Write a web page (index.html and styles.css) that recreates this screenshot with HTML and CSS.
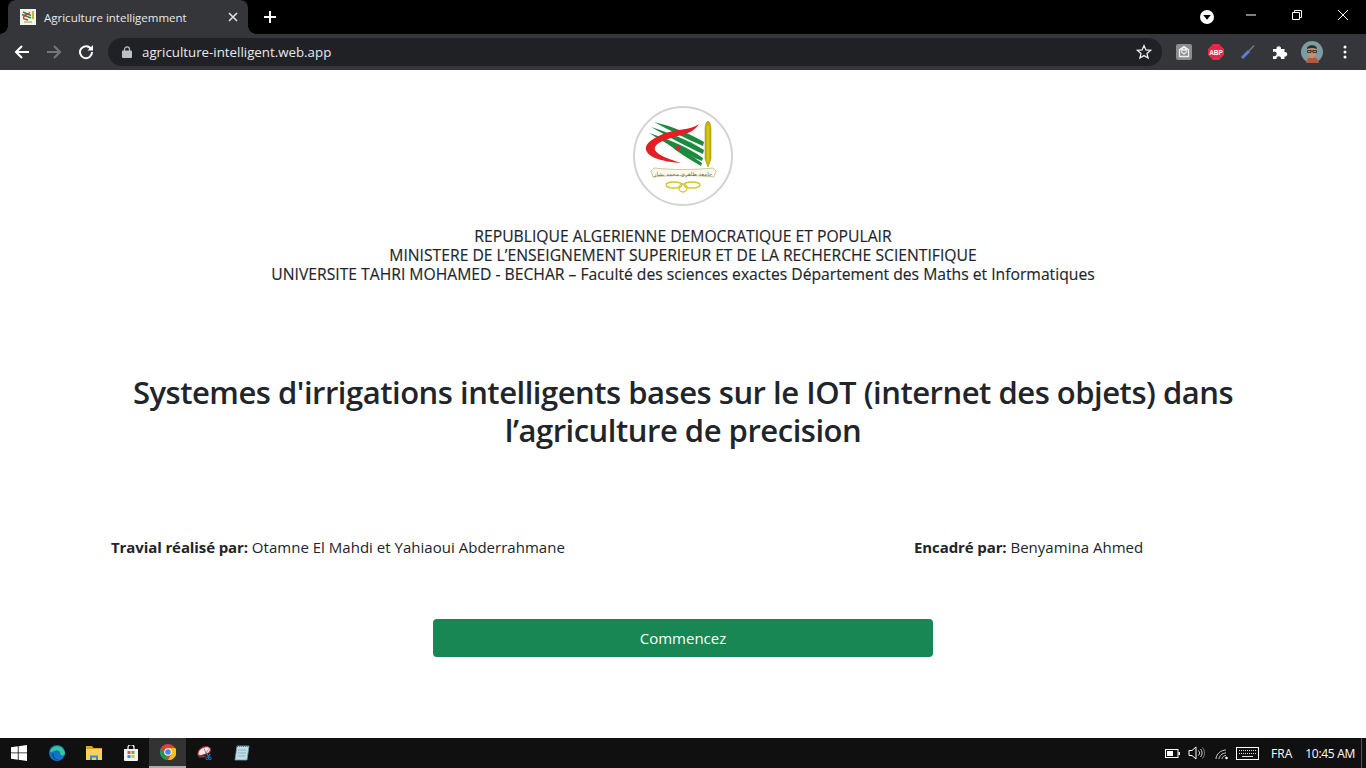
FILE: index.html
```html
<!DOCTYPE html>
<html lang="fr">
<head>
<meta charset="utf-8">
<title>Agriculture intelligemment</title>
<link rel="stylesheet" href="styles.css">
</head>
<body>
<div class="screen">
  <header class="chrome">
    <div class="tabstrip">
      <div class="tab">
        <svg class="favicon" viewBox="0 0 16 16"><rect width="16" height="16" fill="#f4f4ee"/><path d="M3 3l8 3.500M2 5.500l9 3.500" stroke="#2f8f3f" stroke-width="1.600" fill="none"/><path d="M10 3.500C6 6 2 7 4 10l4 1" stroke="#e0282c" stroke-width="1.400" fill="none"/><path d="M13 2v8" stroke="#b5a814" stroke-width="1.600"/><path d="M4 13h8" stroke="#c9c49a" stroke-width="2"/></svg>
        <span class="tab-title">Agriculture intelligemment</span>
        <svg class="tab-close" viewBox="0 0 10 10"><path d="M1 1l8 8M9 1l-8 8" stroke="#dee1e6" stroke-width="1.600"/></svg>
      </div>
      <svg class="new-tab" viewBox="0 0 12 12"><path d="M6 0v12M0 6h12" stroke="#fff" stroke-width="2"/></svg>
      <div class="window-controls">
        <svg class="profile-drop" viewBox="0 0 14 14"><circle cx="7" cy="7" r="7" fill="#fff"/><path d="M3.200 5h7.600L7 9.800z" fill="#000"/></svg>
        <svg class="win-btn" viewBox="0 0 10 10"><path d="M0 5h10" stroke="#fff"/></svg>
        <svg class="win-btn" viewBox="0 0 10 10"><path d="M.5 2.500h7v7h-7zM2.500 2.500v-2h7v7h-2" stroke="#fff" fill="none"/></svg>
        <svg class="win-btn" viewBox="0 0 10 10"><path d="M0 0l10 10M10 0L0 10" stroke="#fff"/></svg>
      </div>
    </div>
    <div class="toolbar">
      <svg class="nav-icon" viewBox="0 0 16 16"><path d="M15 8H2M8 2L2 8l6 6" stroke="#fff" stroke-width="2" fill="none"/></svg>
      <svg class="nav-icon" viewBox="0 0 16 16"><path d="M1 8h13M8 2l6 6-6 6" stroke="#75777a" stroke-width="2" fill="none"/></svg>
      <svg class="nav-icon" viewBox="0 0 16 16"><path d="M13.200 5.200A6 6 0 1 0 14 8" stroke="#fff" stroke-width="2" fill="none"/><path d="M9.500 6.500H15V1z" fill="#fff"/></svg>
      <div class="omnibox">
        <svg class="lock" viewBox="0 0 10 12"><path d="M2.500 5V3.400a2.500 2.500 0 0 1 5 0V5" stroke="#bdc1c6" stroke-width="1.200" fill="none"/><rect y="4.600" width="10" height="7.400" rx="1" fill="#bdc1c6"/></svg>
        <span class="url">agriculture-intelligent.web.app</span>
        <svg class="star" viewBox="0 0 16 16"><path d="M8 1.600l1.900 4.300 4.700.4-3.600 3.100 1.100 4.600L8 11.600l-4.100 2.400L5 9.400 1.400 6.300l4.700-.4z" stroke="#e8eaed" stroke-width="1.300" fill="none"/></svg>
      </div>
      <div class="extensions">
        <svg class="ext" viewBox="0 0 16 16"><rect width="16" height="16" rx="2" fill="#8d8d8d"/><path d="M8 2.500l4.500 3.200v6.800h-9V5.700zM5 7.500l3 2.500 3-2.500M8 2.500L5.500 6h5z" stroke="#eee" stroke-width="1.300" fill="none"/></svg>
        <svg class="ext" viewBox="0 0 16 16"><path d="M5 0h6l5 5v6l-5 5H5l-5-5V5z" fill="#e8274b"/><text x="8" y="10.500" class="abp">ABP</text></svg>
        <svg class="ext" viewBox="0 0 16 16"><path d="M2 14L9 7" stroke="#5b7fd6" stroke-width="3"/><path d="M9 7l5-5.500" stroke="#777a80" stroke-width="1.500"/></svg>
        <svg class="ext" viewBox="0 0 16 16"><path d="M1 5h3.500a2.300 2.300 0 1 1 4.500 0H12.500v3a2.300 2.300 0 1 1 0 4.500V15H9a2.300 2.300 0 1 0-4.500 0H1v-3.300a2.300 2.300 0 1 0 0-3.700z" fill="#fff"/></svg>
        <svg class="avatar" viewBox="0 0 22 22"><circle cx="11" cy="11" r="11" fill="#7d9c9d"/><path d="M5 22c1-5 3-6 6-6s6 1 7 6z" fill="#b8573f"/><ellipse cx="11" cy="11" rx="4.600" ry="6.200" fill="#d08a68"/><path d="M6 8c0-5 10-5 10 0-3-1.500-7-1.500-10 0z" fill="#2b2b2e"/><path d="M6.500 9.500h3.500v2h-3.500zM12 9.500h3.500v2H12zM10 10h2" stroke="#2b2b2e" stroke-width=".9" fill="none"/></svg>
        <svg class="menu" viewBox="0 0 4 14"><circle cx="2" cy="2" r="1.500" fill="#fff"/><circle cx="2" cy="7" r="1.500" fill="#fff"/><circle cx="2" cy="12" r="1.500" fill="#fff"/></svg>
      </div>
    </div>
  </header>

  <main class="page">
    <svg class="logo" viewBox="0 0 100 100">
      <circle cx="50" cy="50" r="49" fill="#fff" stroke="#d3d3d3" stroke-width="2"/>
      <g fill="#1c8a3e">
        <path d="M21 16C38 20 56 27 71 36L70 40C54 33 36 24 21 16z"/>
        <path d="M18 21C36 27 56 34 71 44L70 48C54 41 34 30 18 21z"/>
        <path d="M16 27C36 33 56 42 70 52L69 55C52 48 32 37 16 27z"/>
        <path d="M34 37C46 43 58 49 69 57L68 60C56 53 44 46 34 37z"/>
      </g>
      <path d="M66 18C56 25 44 22 30 28C16 34 10 40 14 46C18 53 34 56 48 57C36 53 24 49 22 44C20 39 28 35 38 32C50 28 60 28 66 18z" fill="#e31e24"/>
      <path d="M45 39l3 3-3 3-3-3z" fill="#e31e24"/>
      <path d="M75 15c2 1 3 4 3 8v30l-3 8-3-8V23c0-4 1-7 3-8z" fill="#c8b400" stroke="#8f8d12" stroke-width=".5"/>
      <path d="M75 20v36" stroke="#efe35a" stroke-width=".8"/>
      <path d="M18 65l3-3c18 2 40 2 59 0l3 3-2 6c-20-2-42-2-61 0z" fill="#fbf9ec" stroke="#c3bb84" stroke-width=".8"/>
      <text x="50" y="69.500" class="logo-arabic">جامعة طاهري محمد بشار</text>
      <g fill="none" stroke="#d2c62e" stroke-width="1.300">
        <ellipse cx="41" cy="79" rx="8" ry="3"/>
        <ellipse cx="59" cy="79" rx="8" ry="3"/>
        <circle cx="50" cy="82" r="4"/>
      </g>
    </svg>
    <div class="institution">
      <p>REPUBLIQUE ALGERIENNE DEMOCRATIQUE ET POPULAIR</p>
      <p>MINISTERE DE L’ENSEIGNEMENT SUPERIEUR ET DE LA RECHERCHE SCIENTIFIQUE</p>
      <p>UNIVERSITE TAHRI MOHAMED - BECHAR – Faculté des sciences exactes Département des Maths et Informatiques</p>
    </div>
    <h1 class="title">Systemes d'irrigations intelligents bases sur le IOT (internet des objets) dans l’agriculture de precision</h1>
    <div class="credits">
      <p class="credit-left"><strong>Travial réalisé par:</strong> Otamne El Mahdi et Yahiaoui Abderrahmane</p>
      <p class="credit-right"><strong>Encadré par:</strong> Benyamina Ahmed</p>
    </div>
    <button class="start" type="button">Commencez</button>
  </main>

  <footer class="taskbar">
    <div class="task-apps">
      <div class="task-cell start-cell"><svg class="task-icon" viewBox="0 0 16 16"><path d="M0 2.300l6.800-1v6.200H0zM7.600 1.200L16 0v7.500H7.600zM0 8.300h6.800v6.400L0 13.700zM7.600 8.300H16V16l-8.400-1.200z" fill="#fff"/></svg></div>
      <div class="task-cell"><svg class="task-icon" viewBox="0 0 16 16"><circle cx="8" cy="8" r="8" fill="#1273c4"/><path d="M1 6c2-6 13-7 15 2 0 3-4 3-5 1 1-3-3-5-6-3-2 1-3 2-4 0z" fill="#37c6a0"/><path d="M5 8c-1 4 2 7 6 7-4 1-8-2-8-6z" fill="#0c4f9c"/></svg></div>
      <div class="task-cell"><svg class="task-icon" viewBox="0 0 16 16"><path d="M0 1h6l1.500 2H16v2H0z" fill="#d9a42a"/><rect y="4" width="16" height="11" fill="#fbd15e"/><path d="M4 15v-4.500h8V15h-2v-2.500H6V15z" fill="#2f8fd0"/></svg></div>
      <div class="task-cell"><svg class="task-icon" viewBox="0 0 16 16"><path d="M1 4h14v11a1 1 0 0 1-1 1H2a1 1 0 0 1-1-1z" fill="#f4f4f4"/><path d="M5 4V2.500a3 3 0 0 1 6 0V4" stroke="#f4f4f4" stroke-width="1.300" fill="none"/><rect x="4.500" y="6" width="3" height="3" fill="#e8543a"/><rect x="8.500" y="6" width="3" height="3" fill="#6cb52d"/><rect x="4.500" y="10" width="3" height="3" fill="#1e9bd8"/><rect x="8.500" y="10" width="3" height="3" fill="#f6b81a"/></svg></div>
      <div class="task-cell active"><svg class="task-icon" viewBox="0 0 16 16"><circle cx="8" cy="8" r="8" fill="#db4437"/><path d="M8 16A8 8 0 0 1 1 4l4 7 3 5z" fill="#0f9d58"/><path d="M8 4h7.400A8 8 0 0 1 8 16l3.500-6z" fill="#f4c20d"/><circle cx="8" cy="8" r="3.800" fill="#fff"/><circle cx="8" cy="8" r="2.800" fill="#4285f4"/></svg></div>
      <div class="task-cell"><svg class="task-icon" viewBox="0 0 18 16"><path d="M1 9C1 4 7 0 12 1c4 1 4 5 1 7l-9 3C2 11 1 10 1 9z" fill="#f4e8e8" stroke="#b52b35" stroke-width="1.200"/><path d="M8 3l2 5M10 8l3-4" stroke="#666" stroke-width=".8"/><path d="M1 10l10 1-3 2-6 0z" fill="#7a4040"/><path d="M11 9l2 3M15 9l-2 3" stroke="#1a86d8" stroke-width="1.200"/><circle cx="11.500" cy="14" r="1.500" fill="none" stroke="#1a86d8"/><circle cx="14.500" cy="14" r="1.500" fill="none" stroke="#1a86d8"/></svg></div>
      <div class="task-cell"><svg class="task-icon" viewBox="0 0 16 16"><path d="M3 1h12l-2 14H1z" fill="#bfe0ea" stroke="#6f99a8" stroke-width=".8"/><path d="M3 1h12" stroke="#45606c" stroke-width="1.600" stroke-dasharray="1 1"/><path d="M4 5h8M4 8h8M3.500 11h8" stroke="#7fa6b4" stroke-width=".8"/></svg></div>
    </div>
    <div class="tray">
      <svg class="tray-battery" viewBox="0 0 15 9"><rect x=".5" y=".5" width="12.500" height="8" fill="none" stroke="#fff"/><rect x="2" y="2" width="6" height="5" fill="#fff"/><rect x="13.500" y="3" width="1.500" height="3" fill="#fff"/></svg>
      <svg class="tray-sound" viewBox="0 0 18 14"><path d="M1 4.500h3L8 1v12L4 9.500H1z" fill="none" stroke="#fff"/><path d="M10.500 4.500a3.500 3.500 0 0 1 0 5M12.500 3a6 6 0 0 1 0 8" fill="none" stroke="#ccc"/><path d="M14.500 1.500a8.500 8.500 0 0 1 0 11" fill="none" stroke="#777"/></svg>
      <svg class="tray-wifi" viewBox="0 0 14 13"><circle cx="11.500" cy="11" r="1.300" fill="#fff"/><path d="M1 12C1 7 6 3 11 3M4 12c0-3 3-6 7-6M7 12c0-2 2-3.500 4-3.500" fill="none" stroke="#ccc"/></svg>
      <svg class="tray-keyboard" viewBox="0 0 23 13"><rect x=".5" y=".5" width="22" height="12" fill="none" stroke="#fff"/><path d="M3 3.500h17M3 6.500h17" stroke="#ddd" stroke-dasharray="1 1"/><path d="M6 9.500h11" stroke="#ddd"/></svg>
      <span class="tray-lang">FRA</span>
      <span class="tray-clock">10:45 AM</span>
      <span class="show-desktop"></span>
    </div>
  </footer>
</div>
</body>
</html>
```

FILE: styles.css
```css
* { box-sizing: border-box; }
html, body { margin: 0; height: 100%; overflow: hidden; }
body { font-family: "Open Sans", "Noto Sans", sans-serif; background: #fff; color: #212529; }
p { margin: 0; }
.screen { display: flex; flex-direction: column; height: 768px; }

.chrome { flex: none; height: 70px; background: #000; }
.tabstrip { display: flex; align-items: flex-end; height: 34px; padding-left: 8px; }
.tab { position: relative; display: flex; align-items: center; width: 240px; height: 34px; padding: 0 10px 0 12px; background: #35363a; border-radius: 8px 8px 0 0; }
.tab::before, .tab::after { content: ""; position: absolute; bottom: 0; width: 8px; height: 8px; }
.tab::before { left: -8px; background: radial-gradient(circle at 0 0, transparent 7.500px, #35363a 8px); }
.tab::after { right: -8px; background: radial-gradient(circle at 100% 0, transparent 7.500px, #35363a 8px); }
.favicon { width: 16px; height: 16px; flex: none; }
.tab-title { flex: 1; margin-left: 8px; font: 11.500px "Open Sans", sans-serif; color: #e8eaed; white-space: nowrap; }
.tab-close { width: 10px; height: 10px; flex: none; }
.new-tab { width: 12px; height: 12px; margin: 0 0 11px 16px; flex: none; }
.window-controls { display: flex; align-items: center; margin-left: auto; height: 34px; }
.profile-drop { width: 14px; height: 14px; margin-right: 32px; }
.win-btn { width: 10px; height: 10px; margin-right: 36px; margin-bottom: 4px; }
.win-btn:last-child { margin-right: 18px; }

.toolbar { display: flex; align-items: center; height: 36px; padding-left: 14px; background: #35363a; }
.nav-icon { width: 16px; height: 16px; margin-right: 16px; flex: none; }
.omnibox { display: flex; align-items: center; width: 1054px; height: 28px; margin-left: -2px; padding: 0 10px 0 14px; border-radius: 14px; background: #202124; }
.lock { width: 10px; height: 12px; flex: none; }
.url { flex: 1; margin-left: 10px; font-size: 13.300px; color: #e8eaed; }
.star { width: 16px; height: 16px; flex: none; }
.extensions { display: flex; align-items: center; padding-left: 14px; }
.ext { width: 16px; height: 16px; margin-right: 16px; flex: none; }
.abp { font: bold 6.500px "Liberation Sans", sans-serif; fill: #fff; text-anchor: middle; }
.avatar { width: 22px; height: 22px; margin: 0 20px 0 -3px; flex: none; }
.menu { width: 4px; height: 14px; flex: none; }

.page { flex: 1; display: flex; flex-direction: column; align-items: center; padding-top: 36px; background: #fff; }
.logo { width: 100px; height: 100px; flex: none; }
.logo-arabic { font: 5.500px "DejaVu Sans", sans-serif; fill: #6f6c4c; text-anchor: middle; }
.institution { margin-top: 21px; text-align: center; font-size: 15.700px; line-height: 19px; font-weight: 500; -webkit-text-stroke: .15px #212529; }
.title { width: 1120px; margin: 89px 0 0; text-align: center; font-size: 31px; line-height: 38.400px; font-weight: 600; letter-spacing: -.48px; }
.credits { display: flex; align-self: stretch; margin-top: 85px; padding-left: 111px; font-size: 15px; line-height: 24px; letter-spacing: .02px; }
.credits strong { letter-spacing: -.1px; }
.credit-left { width: 803px; }
.start { width: 500px; height: 38px; margin-top: 60px; border: 0; border-radius: 4px; background: #198754; color: #fff; font: 15px "Open Sans", sans-serif; }

.taskbar { flex: none; display: flex; justify-content: space-between; height: 30px; background: #101010; }
.task-apps { display: flex; }
.task-cell { display: flex; align-items: center; justify-content: center; width: 37px; height: 30px; }
.start-cell { width: 38px; }
.task-cell.active { background: #333; border-bottom: 2px solid #aaa; }
.task-icon { width: 16px; height: 16px; }
.tray { display: flex; align-items: center; color: #fff; font-size: 12px; }
.tray-battery { width: 15px; height: 9px; margin-right: 8px; }
.tray-sound { width: 18px; height: 14px; margin-right: 9px; }
.tray-wifi { width: 14px; height: 13px; margin-right: 7px; }
.tray-keyboard { width: 23px; height: 13px; margin-right: 12px; }
.tray-lang { margin-right: 13px; }
.tray-clock { margin-right: 6px; letter-spacing: -.3px; }
.show-desktop { width: 1px; height: 30px; background: #555; margin-right: 4px; }
```
